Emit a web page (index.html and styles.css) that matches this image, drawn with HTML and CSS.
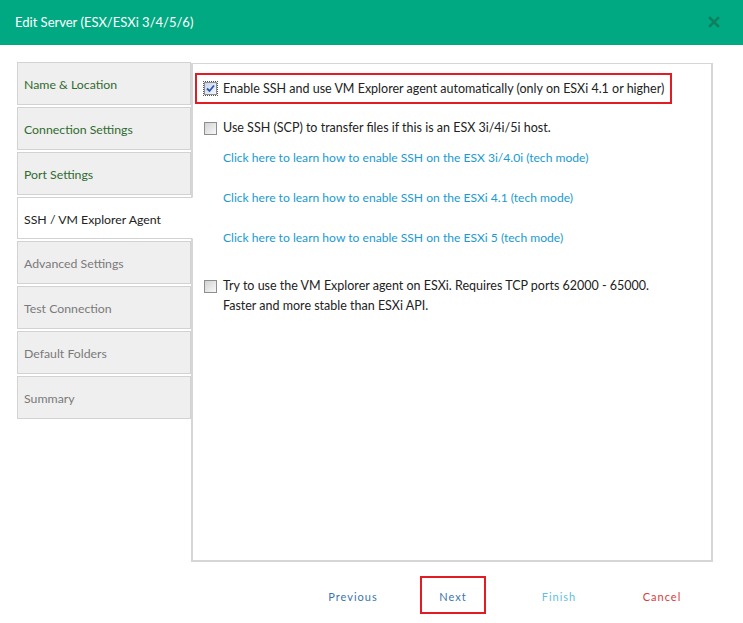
FILE: index.html
```html
<!DOCTYPE html>
<html>
<head>
<meta charset="utf-8">
<link rel="stylesheet" href="styles.css">
</head>
<body>
<div class="dialog">
  <header class="head">
    <span class="title">Edit Server (ESX/ESXi 3/4/5/6)</span>
    <svg class="close" width="12" height="12" viewBox="0 0 12 12"><path d="M2 2 L10 10 M10 2 L2 10" stroke="#0d8060" stroke-width="2.6" stroke-linecap="square"/></svg>
  </header>
  <div class="main">
    <nav class="tabs">
      <div class="tab done">Name &amp; Location</div>
      <div class="tab done">Connection Settings</div>
      <div class="tab done">Port Settings</div>
      <div class="tab active">SSH / VM Explorer Agent</div>
      <div class="tab off">Advanced Settings</div>
      <div class="tab off">Test Connection</div>
      <div class="tab off">Default Folders</div>
      <div class="tab off">Summary</div>
    </nav>
    <section class="panel">
      <div class="row hl">
        <span class="cb checked"><svg width="11" height="11" viewBox="0 0 11 11"><path d="M2 5.5 L4.5 8 L9 2.5" fill="none" stroke="#2a56b8" stroke-width="1.8"/></svg></span>
        <span class="label">Enable SSH and use VM Explorer agent automatically (only on ESXi 4.1 or higher)</span>
      </div>
      <div class="row r2">
        <span class="cb"></span>
        <span class="label">Use SSH (SCP) to transfer files if this is an ESX 3i/4i/5i host.</span>
      </div>
      <a class="link">Click here to learn how to enable SSH on the ESX 3i/4.0i (tech mode)</a>
      <a class="link">Click here to learn how to enable SSH on the ESXi 4.1 (tech mode)</a>
      <a class="link">Click here to learn how to enable SSH on the ESXi 5 (tech mode)</a>
      <div class="row r3">
        <span class="cb"></span>
        <span class="label">Try to use the VM Explorer agent on ESXi. Requires TCP ports 62000 - 65000.<br>Faster and more stable than ESXi API.</span>
      </div>
    </section>
  </div>
  <footer class="foot">
    <span class="btn prev">Previous</span>
    <span class="btn next">Next</span>
    <span class="btn finish">Finish</span>
    <span class="btn cancel">Cancel</span>
  </footer>
</div>
</body>
</html>
```
FILE: styles.css
```css
html, body { margin: 0; padding: 0; background: #fff; }
body { font-family: Lato, "Open Sans", sans-serif; font-size: 13px; color: #333; width: 743px; height: 623px; overflow: hidden; }
.head { height: 45px; background: #01a982; display: flex; align-items: center; justify-content: space-between; padding: 0 23px 0 15px; box-sizing: border-box; }
.title { color: #fff; font-size: 13px; margin-top: -2px; }
.close { margin-top: -1px; }
.main { display: flex; align-items: flex-start; padding: 17px 0 0 17px; }
.tabs { width: 174px; display: flex; flex-direction: column; gap: 2px; }
.tab { height: 43px; box-sizing: border-box; border: 1px solid #d2d2d2; background: #efefef; display: flex; align-items: center; padding: 2px 0 0 6px; font-size: 12.3px; }
.tab.done { color: #2f6b2f; }
.tab.active { height: 42px; background: #fff; color: #222; border-right-color: #fff; margin-right: -2px; position: relative; z-index: 1; }
.tab.off { color: #7a7a7a; }
.panel { width: 522px; height: 499px; box-sizing: border-box; border: 2px solid #d6d6d6; border-top-width: 1px; margin-top: 1px; padding: 9px 0 0 2px; display: flex; flex-direction: column; align-items: flex-start; }
.row { display: flex; align-items: flex-start; line-height: 20px; font-size: 12.5px; white-space: nowrap; }
.hl { border: 2px solid #e31b23; width: 477px; height: 31px; box-sizing: border-box; align-items: center; padding-left: 7px; }
.hl .cb { margin-top: 0; }
.r2 { margin: 14px 0 0 9px; }
.r3 { margin: 18px 0 0 9px; }
.cb { width: 11px; height: 11px; border: 1px solid #8e8e8e; background: linear-gradient(135deg, #d2d2d2, #f8f8f8); margin: 4px 6px 0 0; flex: none; display: flex; align-items: center; justify-content: center; }
.cb.checked { outline: 1px dotted #555; outline-offset: 0; background: linear-gradient(135deg, #c9d6ea, #f4f7fb); }
.label { color: #222; }
.link { display: block; height: 40px; line-height: 40px; margin-left: 28px; color: #1a9ad0; font-size: 12.1px; }
.foot { display: flex; padding: 14px 0 0 320px; }
.btn { width: 66px; height: 38px; box-sizing: border-box; display: flex; align-items: center; justify-content: center; font-size: 11px; letter-spacing: 1px; padding-top: 2px; }
.next { margin-left: 34px; }
.finish { margin-left: 40px; }
.cancel { margin-left: 37px; }
.prev { color: #3b75ad; }
.next { color: #3b75ad; border: 2px solid #e31b23; }
.finish { color: #62bfe0; }
.cancel { color: #d93b3b; }
```
